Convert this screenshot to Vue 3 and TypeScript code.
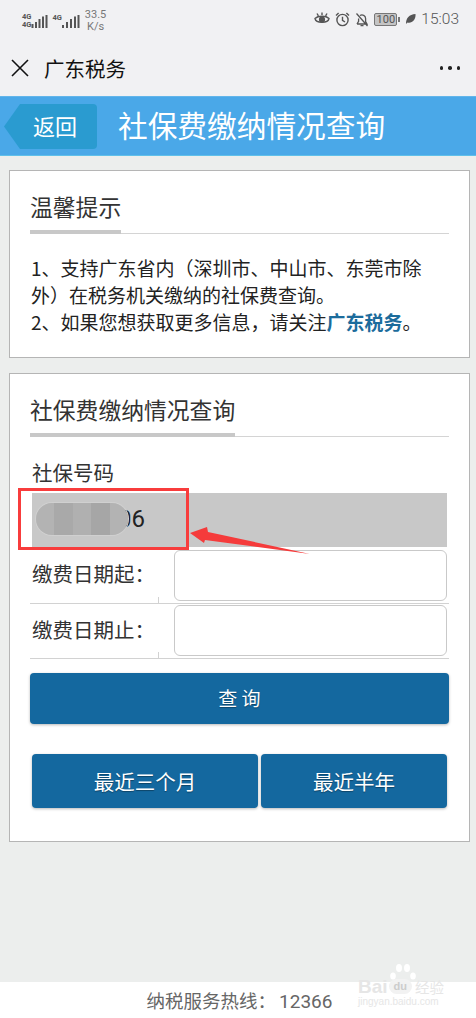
<template>
  <div class="page">
    <div class="status-bar">
      <div class="status-left">
        <div class="sim">
          <div class="sim-tags"><span>4G</span><span>4G</span></div>
          <svg width="22" height="16" viewBox="0 0 22 16">
            <path d="M4.500 11h2v4h-2zM8 9h2v6H8zM11.500 6h2v9h-2zM15 3.500h2V15h-2zM18.500 2h2v13h-2z" fill="#555" />
          </svg>
        </div>
        <div class="sim second">
          <span class="sim-tag">4G</span>
          <svg width="20" height="16" viewBox="0 0 20 16">
            <path d="M0 12h2v3H0zM4 9h2v6H4zM8 6h2v9H8zM12 3.500h2V15h-2zM15.500 2h2v13h-2z" fill="#555" />
          </svg>
        </div>
        <div class="speed"><span>33.5</span><span>K/s</span></div>
      </div>
      <div class="status-right">
        <svg width="16" height="14" viewBox="0 0 16 14" fill="none" stroke="#555" stroke-width="1.4">
          <path d="M1 6.5C4 3.5 12 3.5 15 6.5C14 11.5 2 11.5 1 6.5Z" />
          <circle cx="8" cy="7.5" r="2.4" fill="#555" />
          <path d="M3 1.5l1.4 2.4M13 1.5l-1.4 2.4M8 .5v2.5" />
        </svg>
        <svg width="15" height="15" viewBox="0 0 15 15" fill="none" stroke="#555" stroke-width="1.4">
          <circle cx="7.5" cy="8" r="5.6" />
          <path d="M7.5 4.8V8.3L10 10M1 3.5 3.6 1M14 3.5 11.4 1" />
        </svg>
        <svg width="14" height="15" viewBox="0 0 14 15" fill="none" stroke="#555" stroke-width="1.3">
          <path d="M2 12h10L10.6 9.5V6.5A3.6 3.6 0 0 0 5 3.5M3.6 6.4v3L2 12M5.5 13.6h3M1.5 1.5 12.5 14" />
        </svg>
        <div class="battery"><span>100</span></div>
        <svg class="leaf" width="11" height="12" viewBox="0 0 11 12">
          <path d="M1 11C1 5 4 1.5 10.5 1 11 7 7 10.5 2.5 9.5Z" fill="#555" />
        </svg>
        <span class="clock">15:03</span>
      </div>
    </div>

    <nav class="wx-nav">
      <svg width="18" height="18" viewBox="0 0 18 18" stroke="#111" stroke-width="1.6">
        <path d="M1 1l16 16M17 1 1 17" />
      </svg>
      <span class="wx-title">广东税务</span>
      <div class="dots"><i></i><i></i><i></i></div>
    </nav>

    <header class="top-bar">
      <button class="back-btn">返回</button>
      <h1>社保费缴纳情况查询</h1>
    </header>

    <main class="content">
      <section class="card tips">
        <h2 class="card-title"><span>温馨提示</span></h2>
        <p>1、支持广东省内（深圳市、中山市、东莞市除外）在税务机关缴纳的社保费查询。</p>
        <p>2、如果您想获取更多信息，请关注<b>广东税务</b>。</p>
      </section>

      <section class="card query">
        <h2 class="card-title"><span>社保费缴纳情况查询</span></h2>
        <label class="no-label">社保号码</label>
        <div class="no-field">
          <span class="no-value">06</span>
          <div class="mosaic"><i></i><i></i><i></i><i></i><i></i></div>
        </div>
        <div v-for="row in dateRows" :key="row" class="date-row">
          <label>{{ row }}：</label>
          <input type="text" />
        </div>
        <button class="btn btn-query">查 询</button>
        <div class="quick">
          <button class="btn recent3">最近三个月</button>
          <button class="btn recent6">最近半年</button>
        </div>

        <div class="red-box"></div>
        <svg class="arrow" width="124" height="32" viewBox="0 0 124 32">
          <path d="M0 6 17 0 18 5 120 27 15 13 14 16Z" fill="#f53b3b" />
        </svg>
      </section>
    </main>

    <footer class="hotline">纳税服务热线：<span>12366</span></footer>

    <div class="watermark">
      <svg class="paw" width="26" height="18" viewBox="0 0 26 18" fill="#fff">
        <ellipse cx="3" cy="12" rx="2.8" ry="3.6" />
        <ellipse cx="9" cy="4" rx="3" ry="4" />
        <ellipse cx="17" cy="4" rx="3" ry="4" />
        <ellipse cx="23" cy="12" rx="2.8" ry="3.6" />
      </svg>
      <div class="wm-main">
        <span class="wm-bai">Bai</span>
        <span class="wm-du">du</span>
        <span class="wm-jy">经验</span>
      </div>
      <div class="wm-url">jingyan.baidu.com</div>
    </div>
  </div>
</template>

<script setup lang="ts">
const dateRows: string[] = ['缴费日期起', '缴费日期止']
</script>

<style>
html,
body {
  margin: 0;
  background: #eef0ef;
}
</style>

<style scoped>
.page {
  position: relative;
  display: flex;
  flex-direction: column;
  width: 476px;
  height: 1018px;
  overflow: hidden;
  background: #eceeed;
  font-family: "Noto Sans CJK SC", "Liberation Sans", sans-serif;
  color: #333;
}

.status-bar {
  display: flex;
  justify-content: space-between;
  align-items: center;
  height: 46px;
  padding: 0 17px 0 22px;
  box-sizing: border-box;
  background: #f1f1f3;
  color: #555;
  font-family: "Roboto", "Liberation Sans", sans-serif;
}

.status-left,
.status-right {
  display: flex;
  align-items: center;
}

.status-left {
  margin-top: -4px;
}

.status-right {
  gap: 5px;
  margin-top: -8px;
}

.sim {
  display: flex;
  align-items: flex-end;
}

.sim-tags {
  display: flex;
  flex-direction: column;
  font-size: 7.5px;
  line-height: 8px;
  font-weight: 700;
}

.sim svg {
  margin-left: -4px;
}

.second {
  margin-left: 3px;
}

.second svg {
  margin-left: 0;
}

.sim-tag {
  font-size: 7.5px;
  line-height: 8px;
  font-weight: 700;
  align-self: flex-start;
  margin-top: 1px;
}

.speed {
  display: flex;
  flex-direction: column;
  align-items: center;
  margin-left: 3px;
  font-size: 11px;
  line-height: 12px;
  color: #777;
}

.battery {
  position: relative;
  width: 23px;
  height: 13px;
  box-sizing: border-box;
  border: 1px solid #777;
  border-radius: 2px;
  background: #c4c4c4;
  font-size: 11px;
  line-height: 11px;
  text-align: center;
}

.battery::after {
  content: "";
  position: absolute;
  right: -4px;
  top: 3px;
  width: 2px;
  height: 5px;
  background: #777;
}

.leaf {
  margin-left: 3px;
}

.clock {
  font-size: 15.5px;
  font-weight: 300;
  color: #555;
}

.wx-nav {
  display: flex;
  align-items: center;
  height: 50px;
  padding: 0 16px 6px 11px;
  box-sizing: border-box;
  background: #f1f1f3;
}

.wx-title {
  margin-left: 15px;
  font-size: 20.5px;
  color: #111;
}

.dots {
  display: flex;
  gap: 5px;
  margin-left: auto;
}

.dots i {
  width: 3.5px;
  height: 3.5px;
  border-radius: 50%;
  background: #222;
}

.top-bar {
  display: flex;
  align-items: center;
  height: 60px;
  padding: 0 0 0 4px;
  box-sizing: border-box;
  background: #4aa8e8;
  border-top: 1px solid #62b5ea;
  border-bottom: 1px solid #5fc0ea;
}

.back-btn {
  width: 93px;
  height: 45px;
  margin-top: 1px;
  padding: 0 0 3px 9px;
  border: 0;
  background: #2a9bd0;
  clip-path: polygon(16px 0, 100% 0, 100% 100%, 16px 100%, 0 50%);
  border-radius: 4px;
  color: #fff;
  font-family: inherit;
  font-size: 22px;
}

.top-bar h1 {
  margin: -3px 0 0 21px;
  font-size: 29.7px;
  font-weight: 400;
  color: #fff;
}

.content {
  flex: 1;
  display: flex;
  flex-direction: column;
  gap: 15px;
  padding: 14px 6px 0 9px;
}

.card {
  position: relative;
  background: #fff;
  border: 1px solid #b5b5b5;
  padding: 0 20px;
}

.tips {
  height: 188px;
  box-sizing: border-box;
}

.card-title {
  margin: 0;
  height: 63px;
  box-sizing: border-box;
  border-bottom: 1px solid #d4d4d4;
  font-weight: 400;
  font-size: 22.8px;
  line-height: 32px;
  color: #333;
}

.card-title span {
  display: block;
  width: fit-content;
  height: 63px;
  padding-top: 20px;
  box-sizing: border-box;
  border-bottom: 4px solid #c8c8c8;
}

.tips p {
  margin: 0 0 0 1px;
  font-size: 19px;
  line-height: 27px;
  color: #222;
}

.tips .card-title {
  margin-bottom: 20px;
}

.tips b {
  color: #1c6c9c;
}

.query {
  height: 469px;
  box-sizing: border-box;
}

.no-label {
  display: block;
  margin: 20px 0 0 2px;
  font-size: 20.5px;
  line-height: 30px;
}

.no-field {
  position: relative;
  display: flex;
  align-items: center;
  height: 54px;
  margin: 6px 2px 1px;
  padding-left: 86px;
  background: #c8c8c8;
  font-family: "Roboto", "Liberation Sans", sans-serif;
  font-size: 24px;
  color: #222;
}

.no-value {
  margin-top: -2px;
}

.mosaic {
  position: absolute;
  left: 4px;
  top: 10px;
  display: flex;
  width: 92px;
  height: 32px;
  overflow: hidden;
  border-radius: 16px;
  box-shadow: 0 0 0 1px #d0d0d0;
}

.mosaic i {
  flex: 1;
  background: #b3b3b3;
}

.mosaic i:nth-child(2) {
  background: #a9a9a9;
}

.mosaic i:nth-child(3) {
  background: #b0b0b0;
}

.mosaic i:nth-child(4) {
  background: #a6a6a6;
}

.date-row {
  position: relative;
  display: flex;
  align-items: center;
  justify-content: space-between;
  height: 55.5px;
  box-sizing: border-box;
  border-bottom: 1px solid #d2d2d2;
  padding: 2px 2px;
}

.date-row::after {
  content: "";
  position: absolute;
  left: 128px;
  bottom: 0;
  width: 1px;
  height: 6px;
  background: #d2d2d2;
}

.date-row label {
  font-size: 20.5px;
  margin-top: -4px;
}

.date-row input {
  width: 273.5px;
  height: 51px;
  box-sizing: border-box;
  border: 1px solid #c9c9c9;
  border-radius: 6px;
  background: #fff;
  outline: none;
}

.btn {
  display: block;
  border: 0;
  border-radius: 4px;
  background: #14689f;
  box-shadow: 0 1px 3px rgba(0, 0, 0, 0.28);
  color: #fff;
  font-family: inherit;
  text-shadow: 0 1px 1px rgba(0, 0, 0, 0.35);
}

.btn-query {
  width: 100%;
  height: 51px;
  margin-top: 14px;
  padding-bottom: 3px;
  font-size: 19px;
}

.quick {
  display: flex;
  gap: 3px;
  margin: 30px 2px 0;
}

.recent3 {
  width: 226px;
  height: 54px;
  padding-bottom: 2px;
  font-size: 20.5px;
}

.recent6 {
  flex: 1;
  height: 54px;
  padding-bottom: 2px;
  font-size: 20.5px;
}

.red-box {
  position: absolute;
  left: 8px;
  top: 114px;
  width: 171px;
  height: 62px;
  box-sizing: border-box;
  border: 3px solid #f83c3c;
}

.arrow {
  position: absolute;
  left: 180px;
  top: 153px;
}

.hotline {
  height: 36px;
  padding-left: 3px;
  background: #fff;
  text-align: center;
  font-size: 18.5px;
  line-height: 36px;
  color: #666;
}

.hotline span {
  margin-left: 3px;
  font-family: "Roboto", "Liberation Sans", sans-serif;
  font-size: 19px;
}

.watermark {
  position: absolute;
  left: 358px;
  top: 964px;
  width: 100px;
  color: #e6e6e6;
}

.paw {
  position: absolute;
  left: 32px;
  top: 0;
}

.wm-main {
  display: flex;
  align-items: center;
  height: 17px;
  margin-top: 14px;
  font-family: "Liberation Sans", sans-serif;
  font-weight: 700;
  font-size: 19px;
}

.wm-du {
  margin-left: 1px;
  padding: 0 5px;
  border-radius: 10px;
  background: #f2f2f2;
  color: #ccc;
  font-size: 11px;
  line-height: 15px;
}

.wm-jy {
  margin-left: 3px;
  font-family: "Noto Sans CJK SC", sans-serif;
  font-weight: 400;
  font-size: 14.5px;
}

.wm-url {
  margin-top: 2px;
  font-family: "Liberation Sans", sans-serif;
  font-size: 10px;
  line-height: 10px;
  white-space: nowrap;
}
</style>
